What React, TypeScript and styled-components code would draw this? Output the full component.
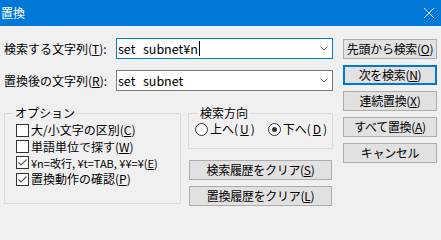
import styled, { createGlobalStyle } from "styled-components";

const GlobalStyle = createGlobalStyle`
  html, body {
    margin: 0;
    padding: 0;
    background: #f0f0f0;
  }
  body {
    font-family: "Noto Sans CJK JP", "Noto Sans", sans-serif;
    font-size: 12px;
    color: #000;
  }
`;

const Window = styled.div`
  width: 441px;
  height: 211px;
  background: #f0f0f0;
  overflow: hidden;
`;

const TitleBar = styled.div`
  height: 26px;
  background: #0078d7;
  color: #fff;
  display: flex;
  align-items: center;
  justify-content: space-between;
  padding: 0 7px 0 1px;
  box-sizing: border-box;
`;

const Title = styled.span`
  font-size: 12px;
  line-height: 14px;
`;

const CloseIcon = styled.svg`
  width: 10px;
  height: 10px;
  display: block;
`;

const Body = styled.div`
  display: flex;
  padding: 12px 0 0 4px;
`;

const Main = styled.div`
  width: 329px;
  display: flex;
  flex-direction: column;
`;

const FieldRow = styled.div<{ $gap?: number }>`
  display: flex;
  align-items: center;
  height: 21px;
  margin-top: ${(p) => p.$gap ?? 0}px;
`;

const FieldLabel = styled.span`
  width: 112px;
  line-height: 14px;
  white-space: nowrap;
`;

const ComboBox = styled.div<{ $focused?: boolean }>`
  width: 217px;
  height: 21px;
  box-sizing: border-box;
  border: 1px solid ${(p) => (p.$focused ? "#0078d7" : "#7a7a7a")};
  background: #fff;
  display: flex;
  align-items: center;
  padding: 0 4px 0 1px;
`;

const ComboText = styled.span`
  flex: 1;
  font-size: 12.5px;
  line-height: 16px;
  white-space: pre;
  word-spacing: 1px;
  display: flex;
  align-items: center;
`;

const Caret = styled.span`
  display: inline-block;
  width: 1px;
  height: 15px;
  background: #000;
  margin-left: 1px;
`;

const Chevron = styled.svg`
  width: 8px;
  height: 5px;
  display: block;
`;

const Lower = styled.div`
  display: flex;
  margin-top: 15px;
`;

const Group = styled.fieldset<{ $w: number; $h: number; $pl: number; $pt: number }>`
  margin: 0;
  width: ${(p) => p.$w}px;
  height: ${(p) => p.$h}px;
  box-sizing: border-box;
  border: 1px solid #dcdcdc;
  padding: ${(p) => p.$pt}px 0 0 ${(p) => p.$pl}px;
  min-width: 0;
`;

const Legend = styled.legend<{ $ml: number }>`
  padding: 0 2px;
  margin-left: ${(p) => p.$ml}px;
  line-height: 14px;
  font-size: 12px;
`;

const CheckRow = styled.label<{ $small?: boolean }>`
  display: flex;
  align-items: center;
  height: 16.4px;
  gap: 2px;
  font-size: ${(p) => (p.$small ? "11px" : "12px")};
  line-height: 14px;
  white-space: nowrap;
`;

const Box = styled.span`
  width: 13px;
  height: 13px;
  box-sizing: border-box;
  border: 1px solid #333;
  background: #fff;
  display: flex;
  align-items: center;
  justify-content: center;
  flex-shrink: 0;
`;

const RightSub = styled.div`
  display: flex;
  flex-direction: column;
  margin-left: 7px;
`;

const RadioRow = styled.div`
  display: flex;
  align-items: center;
  height: 16px;
`;

const RadioItem = styled.label<{ $ml?: number }>`
  display: flex;
  align-items: center;
  gap: 2px;
  margin-left: ${(p) => p.$ml ?? 0}px;
  line-height: 14px;
`;

const RadioCircle = styled.span<{ $checked?: boolean }>`
  width: 13px;
  height: 13px;
  box-sizing: border-box;
  border: 1px solid #333;
  border-radius: 50%;
  background: #fff;
  display: flex;
  align-items: center;
  justify-content: center;
  &::after {
    content: "";
    display: ${(p) => (p.$checked ? "block" : "none")};
    width: 5px;
    height: 5px;
    border-radius: 50%;
    background: #333;
  }
`;

const Button = styled.div<{ $default?: boolean; $w?: number; $mt?: number; $ml?: number }>`
  width: ${(p) => p.$w ?? 94}px;
  height: 20px;
  margin-top: ${(p) => p.$mt ?? 0}px;
  margin-left: ${(p) => p.$ml ?? 0}px;
  box-sizing: border-box;
  border: ${(p) => (p.$default ? "2px solid #0078d7" : "1px solid #adadad")};
  background: #e1e1e1;
  display: flex;
  align-items: center;
  justify-content: center;
  line-height: 14px;
  letter-spacing: -0.3px;
  white-space: nowrap;
`;

const Side = styled.div`
  display: flex;
  flex-direction: column;
  gap: 6px;
  margin-left: 10px;
  padding-top: 1px;
`;

const Check = () => (
  <svg width="11" height="11" viewBox="0 0 11 11">
    <path d="M1.5 5.5 L4 8 L9.5 2.5" fill="none" stroke="#555" strokeWidth="1.1" />
  </svg>
);

const Option = ({
  checked,
  small,
  children,
}: {
  checked?: boolean;
  small?: boolean;
  children: React.ReactNode;
}) => (
  <CheckRow $small={small}>
    <Box>{checked && <Check />}</Box>
    <span>{children}</span>
  </CheckRow>
);

const Combo = ({ value, focused }: { value: string; focused?: boolean }) => (
  <ComboBox $focused={focused}>
    <ComboText>
      {value}
      {focused && <Caret />}
    </ComboText>
    <Chevron viewBox="0 0 8 5">
      <path d="M0.5 0.5 L4 4 L7.5 0.5" fill="none" stroke="#606060" strokeWidth="1" />
    </Chevron>
  </ComboBox>
);

export default function App() {
  return (
    <Window>
      <GlobalStyle />
      <TitleBar>
        <Title>置換</Title>
        <CloseIcon viewBox="0 0 10 10">
          <path d="M0 0 L10 10 M10 0 L0 10" stroke="#fff" strokeWidth="1" />
        </CloseIcon>
      </TitleBar>
      <Body>
        <Main>
          <FieldRow>
            <FieldLabel>
              検索する文字列(<u>T</u>):
            </FieldLabel>
            <Combo value="set  subnet¥n" focused />
          </FieldRow>
          <FieldRow $gap={11}>
            <FieldLabel>
              置換後の文字列(<u>R</u>):
            </FieldLabel>
            <Combo value="set  subnet" />
          </FieldRow>
          <Lower>
            <Group $w={177} $h={98} $pl={11} $pt={2}>
              <Legend $ml={-3}>オプション</Legend>
              <Option>
                大/小文字の区別(<u>C</u>)
              </Option>
              <Option>
                単語単位で探す(<u>W</u>)
              </Option>
              <Option checked small>
                ¥n=改行, ¥t=TAB, ¥¥=¥(<u>E</u>)
              </Option>
              <Option checked>
                置換動作の確認(<u>P</u>)
              </Option>
            </Group>
            <RightSub>
              <Group $w={145} $h={43} $pl={6} $pt={1}>
                <Legend $ml={3}>検索方向</Legend>
                <RadioRow>
                  <RadioItem>
                    <RadioCircle />
                    上へ(<u>U</u>)
                  </RadioItem>
                  <RadioItem $ml={13}>
                    <RadioCircle $checked />
                    下へ(<u>D</u>)
                  </RadioItem>
                </RadioRow>
              </Group>
              <Button $w={143} $mt={11} $ml={1}>
                検索履歴をクリア(<u>S</u>)
              </Button>
              <Button $w={143} $mt={6} $ml={1}>
                置換履歴をクリア(<u>L</u>)
              </Button>
            </RightSub>
          </Lower>
        </Main>
        <Side>
          <Button>
            先頭から検索(<u>O</u>)
          </Button>
          <Button $default>
            次を検索(<u>N</u>)
          </Button>
          <Button>
            連続置換(<u>X</u>)
          </Button>
          <Button>
            すべて置換(<u>A</u>)
          </Button>
          <Button>キャンセル</Button>
        </Side>
      </Body>
    </Window>
  );
}
